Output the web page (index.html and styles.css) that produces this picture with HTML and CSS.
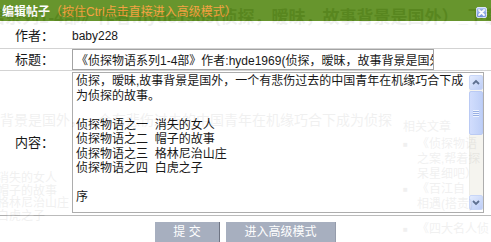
FILE: index.html
```html
<!DOCTYPE html>
<html lang="zh-CN">
<head>
<meta charset="utf-8">
<title>编辑帖子</title>
<link rel="stylesheet" href="styles.css">
</head>
<body>
<div class="page" aria-hidden="true">
  <div class="g-head">《侦探物语系列1-4部》作者:hyde1969(侦探，暧昧，故事背景是国外）_下载</div>
  <div class="g-body">
    <div class="g-main">
      <p class="g-intro">背景是国外，一个有悲伤过去的中国青年在机缘巧合下成为侦探</p>
      <ul class="g-list">
        <li>消失的女人</li>
        <li>帽子的故事</li>
        <li>格林尼治山庄</li>
        <li>白虎之子</li>
      </ul>
    </div>
    <div class="g-side">
      <div class="g-side-title">相关文章</div>
      <ul class="g-side-list">
        <li><span class="g-dot">■</span>《侦探物语</li>
        <li class="g-cont">之案,帮着探</li>
        <li class="g-cont">呆星细吧）</li>
        <li><span class="g-dot">■</span>《百江自</li>
        <li class="g-cont">相遇(搭责)</li>
        <li class="g-gap"><span class="g-dot">■</span>《四大名人侦</li>
      </ul>
    </div>
  </div>
</div>

<div class="dialog">
  <div class="dlg-bar">
    <span class="dlg-title">编辑帖子</span><span class="dlg-hint">（按住Ctrl点击直接进入高级模式）</span>
    <span class="dlg-close">
      <svg width="11" height="11" viewBox="0 0 11 11">
        <defs>
          <linearGradient id="cg" x1="0" y1="0" x2="0" y2="1">
            <stop offset="0" stop-color="#a9c2f7"/>
            <stop offset="1" stop-color="#6d8fdc"/>
          </linearGradient>
        </defs>
        <rect x="0.5" y="0.5" width="10" height="10" rx="1.5" fill="url(#cg)" stroke="#d8e4fb"/>
        <path d="M3 3 L8 8 M8 3 L3 8" stroke="#fff" stroke-width="1.8" stroke-linecap="round"/>
      </svg>
    </span>
  </div>

  <div class="row row-author">
    <div class="label">作者：</div>
    <div class="value">baby228</div>
  </div>

  <div class="row row-title">
    <div class="label">标题：</div>
    <input class="title-input" type="text" value="《侦探物语系列1-4部》作者:hyde1969(侦探，暧昧，故事背景是国外）">
  </div>

  <div class="row row-content">
    <div class="label">内容：</div>
    <div class="textbox">
      <div class="tb-text">侦探，暧昧,故事背景是国外，一个有悲伤过去的中国青年在机缘巧合下成
为侦探的故事。

侦探物语之一  消失的女人
侦探物语之二  帽子的故事
侦探物语之三  格林尼治山庄
侦探物语之四  白虎之子

序</div>
      <div class="scrollbar">
        <div class="sb-btn">
          <svg width="12" height="13" viewBox="0 0 12 13"><path d="M3 8 L6 5 L9 8" fill="none" stroke="#4d6185" stroke-width="1.8"/></svg>
        </div>
        <div class="sb-thumb"><span class="grip"></span></div>
        <div class="sb-track"></div>
        <div class="sb-btn">
          <svg width="12" height="13" viewBox="0 0 12 13"><path d="M3 5 L6 8 L9 5" fill="none" stroke="#4d6185" stroke-width="1.8"/></svg>
        </div>
      </div>
    </div>
  </div>

  <div class="actions">
    <button class="btn btn-submit" type="button">提 交</button>
    <button class="btn btn-adv" type="button">进入高级模式</button>
  </div>
</div>
</body>
</html>
```

FILE: styles.css
```css
html, body {
  margin: 0;
  padding: 0;
}

body {
  width: 491px;
  height: 242px;
  overflow: hidden;
  position: relative;
  background: #fff;
  font-family: "Liberation Sans", "Noto Sans CJK SC", sans-serif;
  color: #000;
}

/* ---------- background page (seen through the dialog) ---------- */
.page {
  color: #6a6a6a;
  width: 491px;
  height: 242px;
  overflow: hidden;
}

.g-head {
  font-size: 17px;
  font-weight: bold;
  white-space: nowrap;
  margin-left: -80px;
  padding-top: 8px;
  line-height: 20px;
}

.g-body {
  display: grid;
  grid-template-columns: 398px 1fr;
}

.g-main {
  padding-top: 84px;
}

.g-intro {
  margin: 0;
  font-size: 14px;
  line-height: 16px;
  white-space: nowrap;
}

.g-list {
  list-style: none;
  margin: 44px 0 0 -3px;
  padding: 0;
  font-size: 12px;
  line-height: 12.5px;
}

.g-side {
  padding: 91px 0 0 5px;
  font-size: 12px;
  white-space: nowrap;
}

.g-side-title {
  line-height: 16px;
  margin-bottom: 2px;
}

.g-side-list {
  list-style: none;
  margin: 0;
  padding: 0;
  line-height: 15px;
}

.g-dot {
  display: inline-block;
  width: 14px;
  font-size: 8px;
  vertical-align: top;
}

.g-cont {
  padding-left: 14px;
}

.g-gap {
  margin-top: 10px;
}

/* ---------- dialog ---------- */
.dialog {
  position: absolute;
  top: 0;
  left: 0;
  width: 491px;
  height: 242px;
  background: #fff;
  opacity: 0.9;
  display: flex;
  flex-direction: column;
}

.dlg-bar {
  height: 21px;
  box-sizing: border-box;
  background: #578a17;
  display: flex;
  align-items: center;
  padding: 3px 0 0 2px;
  font-size: 12px;
  line-height: 18px;
  white-space: nowrap;
}

.dlg-title {
  color: #fff;
  font-weight: bold;
}

.dlg-hint {
  color: #f49a30;
}

.dlg-close {
  margin-left: auto;
  margin-right: 4px;
  align-self: flex-start;
  margin-top: 4px;
  width: 11px;
  height: 11px;
  display: flex;
}

.row {
  display: flex;
  border-bottom: 1px solid #cfcfcf;
  box-sizing: border-box;
}

.label {
  width: 72px;
  flex-shrink: 0;
  box-sizing: border-box;
  padding-left: 15px;
  font-size: 13px;
  line-height: 16px;
}

.row-author {
  height: 30px;
  align-items: center;
  padding-top: 2px;
}

.value {
  font-size: 12px;
  line-height: 16px;
}

.row-title {
  height: 23px;
  align-items: center;
}

.title-input {
  width: 362px;
  height: 21px;
  box-sizing: border-box;
  margin: 0;
  border: 1px solid #9a9a9a;
  padding: 0 0 0 3px;
  font-family: "Liberation Sans", "Noto Sans CJK SC", sans-serif;
  font-size: 12px;
  color: #000;
  background: #fff;
  outline: none;
}

.row-content {
  align-items: center;
  padding: 1px 0 2px;
  border-bottom-color: #b4b4b4;
}

.textbox {
  width: 412px;
  height: 141px;
  box-sizing: border-box;
  border: 1px solid #a5a5a5;
  display: flex;
  background: #fff;
}

.tb-text {
  flex: 1;
  padding: 1px 0 0 3px;
  font-size: 12px;
  line-height: 14.5px;
  white-space: pre;
  overflow: hidden;
}

/* XP-style scrollbar */
.scrollbar {
  width: 14px;
  margin: 2px 0 2px 0;
  display: flex;
  flex-direction: column;
  background: #f4f3ee;
}

.sb-btn {
  height: 15px;
  box-sizing: border-box;
  border: 1px solid #c3d2f7;
  border-radius: 2px;
  background: linear-gradient(135deg, #e1eafe, #b6c8f6);
  display: flex;
  align-items: center;
  justify-content: center;
}

.sb-thumb {
  height: 44px;
  margin-top: 1px;
  box-sizing: border-box;
  border: 1px solid #b3c5f3;
  border-radius: 2px;
  background: linear-gradient(90deg, #cddafd, #b8cbf7);
  display: flex;
  align-items: center;
  justify-content: center;
}

.grip {
  width: 6px;
  height: 7px;
  background: repeating-linear-gradient(180deg, #eef3fe 0 1px, #8fa8e2 1px 2px);
}

.sb-track {
  flex: 1;
  border-left: 1px solid #ecebe4;
}

.actions {
  display: flex;
  justify-content: center;
  gap: 6px;
  padding-top: 6px;
}

.btn {
  height: 20px;
  box-sizing: border-box;
  border: 0;
  border-right: 1px solid #5f6676;
  background: #9ea7b9;
  color: #fff;
  font-family: "Liberation Sans", "Noto Sans CJK SC", sans-serif;
  font-size: 12px;
  line-height: 20px;
  padding: 0;
  margin: 0;
}

.btn-submit {
  width: 65px;
}

.btn-adv {
  width: 110px;
  border-right-color: #8a92a3;
}
```
